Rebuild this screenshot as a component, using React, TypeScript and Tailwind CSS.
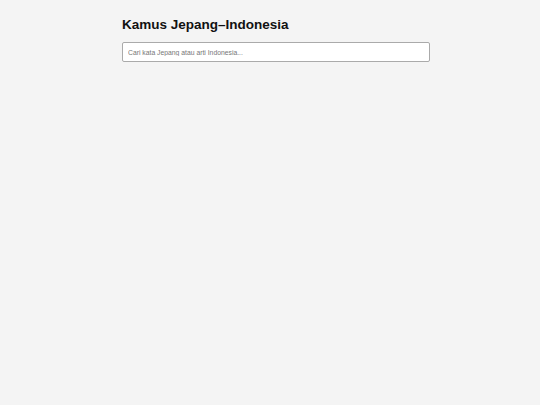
export default function App() {
  return (
    <div className="min-h-screen bg-[#f4f4f4] font-['Liberation_Sans',Arial,sans-serif]">
      <div className="mx-auto w-[320px] pl-3 pt-[15px]">
        <h1 className="text-[13.5px] font-bold leading-[20px] text-[#111]">Kamus Jepang–Indonesia</h1>
        <input
          type="text"
          placeholder="Cari kata Jepang atau arti Indonesia..."
          className="mt-[7px] block h-[20px] w-[308px] rounded-[2px] border border-[#aaa] bg-white px-[5px] text-[6.8px] text-[#333] placeholder:text-[#777] outline-none"
        />
      </div>
    </div>
  );
}
